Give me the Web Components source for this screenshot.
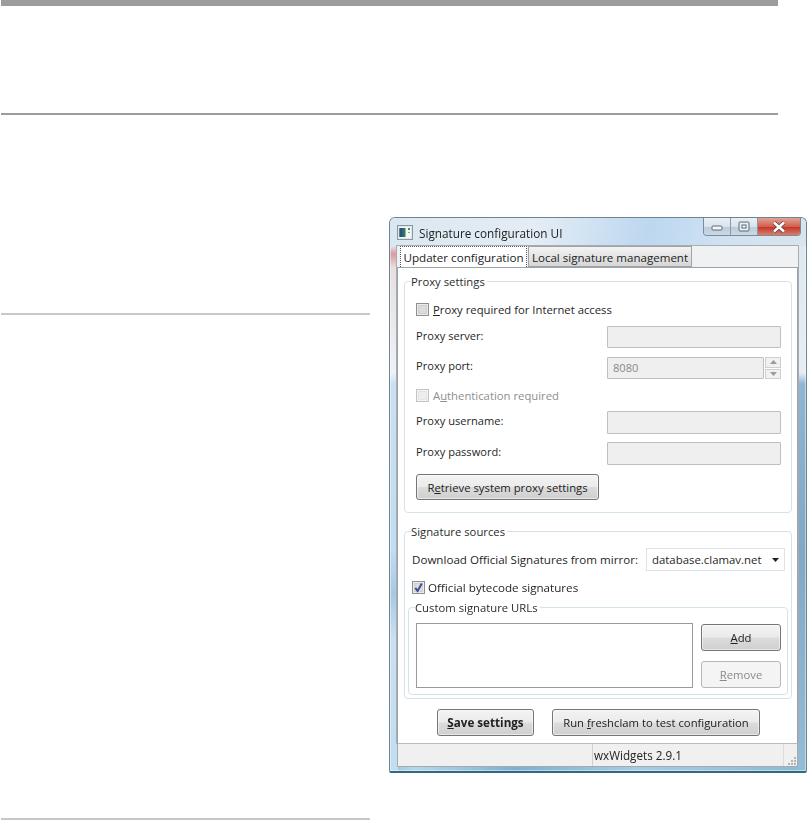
<!DOCTYPE html>
<html><head><meta charset="utf-8"><style>
html,body{margin:0;padding:0;background:#fff}
body{font-family:"Open Sans","Liberation Sans",sans-serif;font-size:11.3px;color:#1f1f1f;height:820px;overflow:hidden}
</style></head><body>
<x-page>
  <x-window title="Signature configuration UI">
    <x-tabs>
      <x-panel>
        <x-group label="Proxy settings">
          <x-rows>
            <x-check style="height:13px;font-size:11.3px"><u>P</u>roxy required for Internet access</x-check>
            <x-field style="margin-top:10px">Proxy server:</x-field>
            <x-field style="margin-top:9px" value="8080" spin>Proxy port:</x-field>
            <x-check style="margin-top:10px;height:13px" disabled>A<u>u</u>thentication required</x-check>
            <x-field style="margin-top:9px" tall>Proxy username:</x-field>
            <x-field style="margin-top:8px" tall>Proxy password:</x-field>
            <x-button style="margin-top:9px;width:183px;height:26px"><span>R<u>e</u>trieve system proxy settings</span></x-button>
          </x-rows>
        </x-group>
        <x-group label="Signature sources" style="margin-top:10px">
          <x-mirror>Download Official Signatures from mirror:</x-mirror>
          <x-check style="margin-top:10px;height:13px;--gap:3px;font-size:11.65px" checked>Official bytecode signatures</x-check>
          <x-group label="Custom signature URLs" style="margin:5px 0 0 -4px">
            <x-urls></x-urls>
          </x-group>
        </x-group>
        <x-actions></x-actions>
      </x-panel>
    </x-tabs>
    <x-status>wxWidgets 2.9.1</x-status>
  </x-window>
</x-page>
<script>
function def(name, css, html, extra){
  customElements.define(name, class extends HTMLElement{
    connectedCallback(){
      if(this.shadowRoot) return;
      const r=this.attachShadow({mode:'open'});
      r.innerHTML='<style>'+css+'</style>'+(typeof html==='function'?html(this):html);
      if(extra) extra(this,r);
    }
  });
}
def('x-page',`
  :host{display:block;margin-left:1px}
  .bar{height:6px;width:777px;background:#9c9c9c}
  .rule{height:2px;width:777px;background:#9c9c9c;margin-top:107px}
  .cols{display:grid;grid-template-columns:369px 418px;column-gap:19px}
  .left{padding-top:198px}
  .left i{display:block;height:2px;background:#c8c8c8}
  .left i+i{margin-top:503px}
  .right{padding-top:102px}
`,`<div class="bar"></div><div class="rule"></div>
  <div class="cols"><div class="left"><i></i><i></i></div><div class="right"><slot></slot></div></div>`);

def('x-window',`
  :host{display:block;width:418px;height:556px;box-sizing:border-box;border:1px solid #6b8494;border-bottom:2px solid #2f6a80;border-radius:6px 6px 2px 2px;
    background:
      linear-gradient(180deg,#dfe8ef 0,#dfe8ef 5%,#d99aa0 6.5%,#e6dfe2 9%,#eef2f5 28%,#c9e0f2 30%,#c2dcf1 60%,#a9c9e2 68%,#c9e0f2 76%,#c2dcf1 100%) left/8px 100% no-repeat,
      linear-gradient(180deg,#dce7f0 0,#e6eef4 28%,#8fb6d2 30%,#7fa9c6 60%,#94bcd6 100%) right/9px 100% no-repeat,
      linear-gradient(90deg,#9cc3de 0,#b9d6ea 6%,#7fb0cf 30%,#a9cbe2 60%,#8fb8d4 100%);
    box-shadow:inset 0 0 0 1px rgba(255,255,255,.45);overflow:hidden;filter:blur(.45px)}
  .wrap{height:100%;display:flex;flex-direction:column}
  .title{height:28px;flex:none;display:flex;align-items:center;padding-left:7px;gap:6px;
    background:linear-gradient(100deg,#dbe7f0 0,#e4edf5 35%,#bcd7ef 62%,#cfe2f2 80%,#d9e4ec 100%)}
  .title span{font-size:11.75px;color:#222;flex:1;padding-top:1px}
  .caps{align-self:flex-start;display:flex;height:17px;margin-right:5px;border:1px solid #7d8a97;border-top:0;border-radius:0 0 4px 4px;overflow:hidden}
  .caps b{display:flex;align-items:center;justify-content:center;width:26px;border-right:1px solid #8a97a4;
    background:linear-gradient(180deg,#e9f0f6 0,#d9e4ee 50%,#bccbd9 52%,#cbd9e5 100%)}
  .caps b.x{width:42px;border:0;background:linear-gradient(180deg,#e2a396 0,#d2604d 50%,#c23a28 55%,#d67f6e 100%)}
  .body{flex:1;margin:0 8px 4px 7px;display:flex;flex-direction:column;min-height:0}
`,t=>`<div class="wrap"><div class="title">
  <svg width="16" height="15" viewBox="0 0 16 15"><rect x=".5" y=".5" width="15" height="14" fill="#dfe5ea" stroke="#8a96a0"/><rect x="2" y="2" width="12" height="11" fill="#f4f6f8"/><rect x="2.5" y="3" width="6" height="9" fill="#2c7a52"/><rect x="2.5" y="3" width="3" height="9" fill="#2a4f8a"/><rect x="11" y="3" width="2" height="2" fill="#4a8a5e"/><rect x="11" y="7" width="2" height="1" fill="#8a9aa6"/></svg>
  <span>${t.getAttribute('title')}</span>
  <div class="caps">
   <b><svg width="13" height="8"><rect x="1" y="3" width="10" height="4" rx="1" fill="#f4f7fa" stroke="#5d6b78"/></svg></b>
   <b><svg width="12" height="11"><rect x="1" y="1" width="10" height="9" rx="1" fill="#e8eef3" stroke="#5d6b78"/><rect x="4" y="4" width="4" height="3" fill="#f9fbfc" stroke="#5d6b78"/></svg></b>
   <b class="x"><svg width="16" height="12" viewBox="0 0 16 12"><path d="M3 1.5l10 9M13 1.5l-10 9" stroke="#5b3a35" stroke-width="4"/><path d="M3 1.5l10 9M13 1.5l-10 9" stroke="#fff" stroke-width="2.6"/></svg></b>
  </div></div>
  <div class="body"><slot></slot></div></div>`);

def('x-tabs',`
  :host{display:flex;flex-direction:column;flex:1;min-height:0;background:#f0f0f0;box-shadow:0 0 0 1px #a7adb2}
  .strip{display:flex;height:21px;flex:none;align-items:flex-start;padding-left:3px;background:#f0f1f2}
  .t{box-sizing:border-box;display:flex;align-items:center;justify-content:center;white-space:nowrap}
  .a{width:127px;height:21px;background:#fff;border:1px dotted #555;border-bottom:0;font-size:11.65px;color:#222;position:relative;z-index:1;margin-right:1px}
  .b{width:164px;height:21px;background:linear-gradient(180deg,#f3f3f3 0,#e6e6e6 45%,#d6d6d6 100%);border:1px solid #a0a4a8;font-size:11.55px;color:#222;padding-top:1px}
  .p{flex:1;display:flex;flex-direction:column;min-height:0}
`,`<div class="strip"><div class="t a">Updater configuration</div><div class="t b">Local signature management</div></div><div class="p"><slot></slot></div>`);

def('x-panel',`
  :host{display:block;flex:1;box-sizing:border-box;background:#fff;border:1px solid #9ba3a8;border-bottom:0;padding:5px 5px 0 6px}
`,`<slot></slot>`);

def('x-group',`
  :host{display:block}
  fieldset{margin:0;border:1px solid #d6e2ea;border-radius:4px;padding:0;min-width:0}
  legend{padding:0;margin-left:6px;padding-right:2px;font-size:11.3px;line-height:17px;color:#2c2c2c;background:#fff}
`,t=>`<fieldset><legend>${t.getAttribute('label')}</legend><div class="c"><slot></slot></div></fieldset>`,
(t,r)=>{
  const c=r.querySelector('.c');
  const lab=t.getAttribute('label');
  if(lab==='Proxy settings') c.style.padding='13px 10px 12px 11px';
  if(lab==='Signature sources') c.style.padding='8px 3px 3px 7px';
  if(lab==='Custom signature URLs') c.style.padding='7px 7px 6px 7px';
});

def('x-rows',`:host{display:flex;flex-direction:column;align-items:stretch}`,`<slot></slot>`);

const box=(on,dis)=>`<svg width="13" height="13" viewBox="0 0 13 13"><rect x=".5" y=".5" width="12" height="12" fill="${dis?'#f4f4f4':'#ececec'}" stroke="${dis?'#c4c4c4':'#8e8f8f'}"/><rect x="2.5" y="2.5" width="8" height="8" fill="${dis?'#eee':'#dcdcdc'}" stroke="${dis?'#e4e4e4':'#cfcfcf'}"/>${on?'<path d="M3.3 6.8l2.3 3.2L9.8 2.6" fill="none" stroke="#3a4f9a" stroke-width="2"/>':''}</svg>`;
def('x-check',`
  :host{display:flex;align-items:center;gap:var(--gap,4px);white-space:nowrap}
  :host([disabled]){color:#8e8e8e}
  svg{flex:none}
`,t=>box(t.hasAttribute('checked'),t.hasAttribute('disabled'))+`<span><slot></slot></span>`);

def('x-field',`
  :host{display:flex;white-space:nowrap;font-size:11.1px}
  .l{width:191px;flex:none;line-height:17px;padding-top:1px}
  .i{box-sizing:border-box;width:175px;height:22px;background:#efefef;border:1px solid #bcc0c2;border-radius:1px;color:#8a8a8a;line-height:20px;padding-left:5px}
  :host([tall]) .i{height:23px}
  :host([spin]) .i{width:157px;height:22px}
  :host([spin]) .l{padding-top:0}
  .s{width:16px;height:22px;margin-left:1px;display:flex;flex-direction:column;gap:1px}
  .s b{flex:1;background:#f1f1f1;border:1px solid #cdcfd0;display:flex;align-items:center;justify-content:center}
`,t=>`<div class="l"><slot></slot></div><div class="i">${t.getAttribute('value')||''}</div>`+
  (t.hasAttribute('spin')?`<div class="s"><b><svg width="7" height="4"><path d="M3.5 0L7 4H0z" fill="#9a9a9a"/></svg></b><b><svg width="7" height="4"><path d="M0 0h7L3.5 4z" fill="#9a9a9a"/></svg></b></div>`:''));

def('x-button',`
  :host{display:flex;box-sizing:border-box;align-items:center;justify-content:center;white-space:nowrap;
    border:1px solid #757575;border-radius:3px;color:#222;
    background:linear-gradient(180deg,#f3f3f3 0,#ebebeb 48%,#dcdcdc 52%,#cfcfcf 100%);
    box-shadow:inset 0 0 0 1px rgba(255,255,255,.55)}
  :host([disabled]){border-color:#b5b7b8;color:#8a8a8a;background:#f4f4f4;box-shadow:none}
  :host([strong]){font-weight:700;font-size:11.65px}
`,`<slot></slot>`);

def('x-mirror',`
  :host{display:flex;align-items:flex-start;white-space:nowrap;font-size:11.6px}
  .l{width:234px;flex:none;padding-top:3px;line-height:17px}
  .c{box-sizing:border-box;width:139px;height:23px;border:1px solid #dde3e8;background:#fff;display:flex;align-items:center;justify-content:space-between;padding:0 5px 0 5px;font-size:11.4px}
`,`<div class="l"><slot></slot></div><div class="c"><span>database.clamav.net</span><svg width="7" height="4"><path d="M0 0h7L3.5 4z" fill="#222"/></svg></div>`);

def('x-urls',`
  :host{display:flex;align-items:flex-start}
  .list{box-sizing:border-box;width:277px;height:65px;flex:none;border:1px solid #9a9a9a;background:#fff}
  .col{margin-left:8px;padding-top:1px;display:flex;flex-direction:column;gap:10px}
  x-button{width:80px;height:27px}
`,`<div class="list"></div><div class="col"><x-button><span><u>A</u>dd</span></x-button><x-button disabled><span><u>R</u>emove</span></x-button></div>`);

def('x-actions',`
  :host{display:flex;justify-content:flex-start;padding:10px 0 0 33px;gap:18px}
  x-button{height:27px}
`,`<x-button strong style="width:97px"><span><u>S</u>ave settings</span></x-button><x-button style="width:208px"><span>Run <u>f</u>reshclam to test configuration</span></x-button>`);

def('x-status',`
  :host{display:flex;flex:none;height:24px;box-sizing:border-box;background:#f0f0f0;border:1px solid #a4a9ad;border-top-color:#b8bcc0;align-items:center;font-size:11.7px;color:#222}
  .a{width:194px;height:100%;flex:none;border-right:1px solid #d0d0d0}
  .b{flex:1;padding-left:1px;height:100%;display:flex;align-items:center;border-right:1px solid #dcdcdc}
  .g{width:13px;height:100%;display:flex;align-items:flex-end;justify-content:flex-end}
`,`<div class="a"></div><div class="b"><slot></slot></div><div class="g"><svg width="11" height="11"><g fill="#b4b4b4"><rect x="8" y="8" width="2" height="2"/><rect x="5" y="8" width="2" height="2"/><rect x="8" y="5" width="2" height="2"/><rect x="2" y="8" width="2" height="2"/><rect x="5" y="5" width="2" height="2"/><rect x="8" y="2" width="2" height="2"/></g></svg></div>`);
</script>
</body></html>
